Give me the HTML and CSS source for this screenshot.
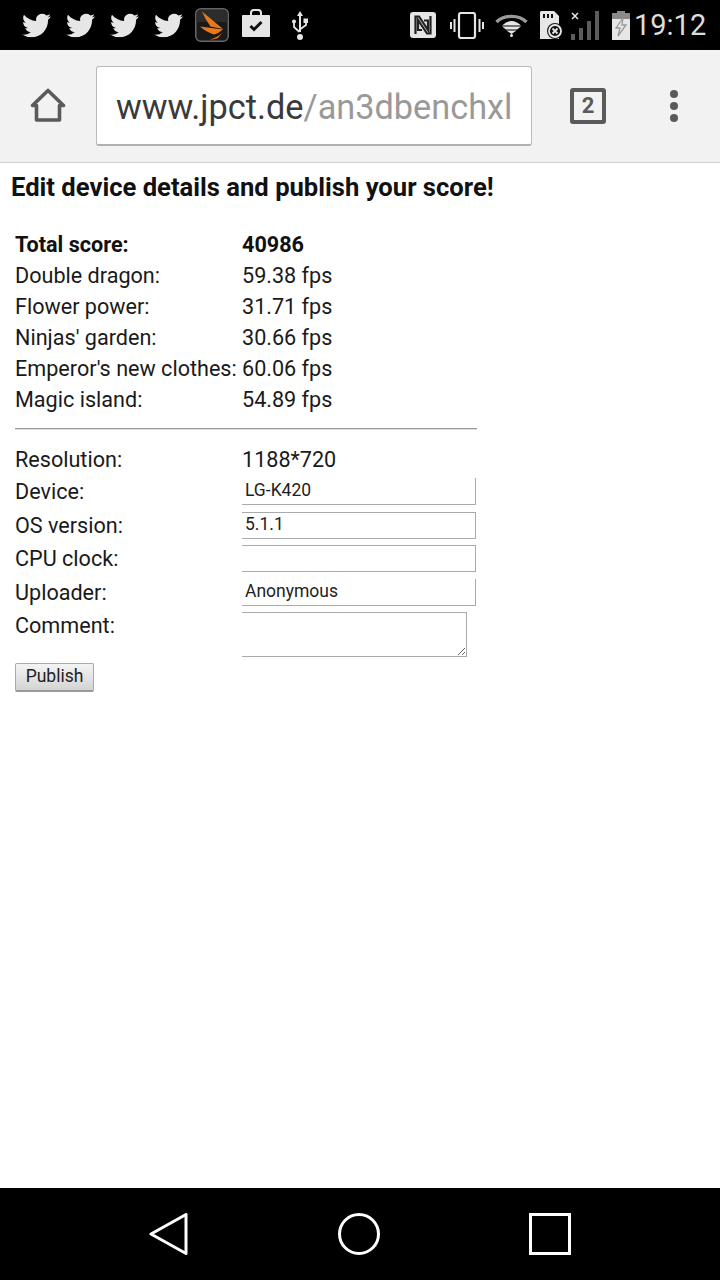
FILE: index.html
```html
<!DOCTYPE html>
<html lang="en">
<head>
    <meta charset="UTF-8">
    <title>Edit device details</title>
    <link rel="stylesheet" href="styles.css">
</head>
<body>
    <div class="status-bar">
        <svg class="bird" viewBox="0 0 24 20"><use href="#twitter"/></svg>
        <svg class="bird" viewBox="0 0 24 20"><use href="#twitter"/></svg>
        <svg class="bird" viewBox="0 0 24 20"><use href="#twitter"/></svg>
        <svg class="bird" viewBox="0 0 24 20"><use href="#twitter"/></svg>
        <svg class="app-icon" viewBox="0 0 34 34">
            <rect x="0.75" y="0.75" width="32.5" height="32.5" rx="5" fill="#1a1a1a" stroke="#666" stroke-width="1.5"/>
            <path d="M1.500 6a4 4 0 0 1 4-4h23a4 4 0 0 1 4 4v8H1.500z" fill="#2c2c2c"/>
            <path d="M7 3.500 L28 21 L15.500 18.500 Q10 11 7 3.500Z" fill="#e8791c"/>
            <path d="M5 18.500 L28 21.500 Q24 25 19 26.500 Q11 24 5 18.500Z" fill="#e8791c"/>
            <path d="M14.500 31.500 Q22 30 27.500 24.500 L23 30 Q19 31.500 14.500 31.500Z" fill="#e8791c"/>
        </svg>
        <svg class="bag" viewBox="0 0 28 28">
            <path d="M9 6V4a3 3 0 0 1 3-3h4a3 3 0 0 1 3 3v2" fill="none" stroke="#e6e6e6" stroke-width="2"/>
            <path d="M1 6h26a1 1 0 0 1 1 1v20a1 1 0 0 1-1 1H1a1 1 0 0 1-1-1V7a1 1 0 0 1 1-1z" fill="#e6e6e6"/>
            <path d="M8.500 17l3.500 3.500 7.500-7.500" fill="none" stroke="#111" stroke-width="3"/>
        </svg>
        <svg class="usb" viewBox="0 0 16 29">
            <path d="M8 0l3 5H9v16H7V5H5z" fill="#e6e6e6"/>
            <path d="M7.500 21 L2 16 V12" fill="none" stroke="#e6e6e6" stroke-width="1.800"/>
            <path d="M8.500 18 L14 14 V11" fill="none" stroke="#e6e6e6" stroke-width="1.800"/>
            <circle cx="2" cy="10.500" r="2" fill="#e6e6e6"/>
            <rect x="11.500" y="7.500" width="4.500" height="4.500" fill="#e6e6e6"/>
            <circle cx="8" cy="26" r="3" fill="#e6e6e6"/>
        </svg>

        <div class="status-right">
            <svg class="nfc" viewBox="0 0 26 26">
                <rect width="26" height="26" rx="3" fill="#e6e6e6"/>
                <path d="M5.500 22V4.500h3.500l9 13.500V8.500h-4" fill="none" stroke="#222" stroke-width="2.200"/>
                <path d="M20.500 4v17.500H17L8 8v10h4" fill="none" stroke="#222" stroke-width="2.200"/>
            </svg>
            <svg class="vibrate" viewBox="0 0 34 27">
                <rect x="9" y="1" width="16" height="25" rx="2" fill="none" stroke="#e6e6e6" stroke-width="2.200"/>
                <path d="M4.500 7v13M1 10v7M29.500 7v13M33 10v7" stroke="#e6e6e6" stroke-width="2"/>
            </svg>
            <svg class="wifi" viewBox="0 0 33 24">
                <path d="M1.500 9 C9 1.500 24 1.500 31.500 9" fill="none" stroke="#9a9a9a" stroke-width="3.200"/>
                <path d="M7 12.500 Q16.500 3.500 26 12.500 L16.500 12.500 L7 12.500Z" fill="#e6e6e6"/>
                <path d="M7 13.500 H26 L22 16.500 H11Z" fill="#e6e6e6"/>
                <path d="M11.500 17.500 H21.500 L16.500 21z" fill="#e6e6e6"/>
                <circle cx="16.500" cy="22.500" r="1.500" fill="#e6e6e6"/>
            </svg>
            <svg class="sd" viewBox="0 0 23 28">
                <path d="M1 0h13l5 5v23H0V1z" fill="#e6e6e6"/>
                <path d="M3 3h2v4H3zM7 3h2v4H7zM11 3h2v4h-2z" fill="#111"/>
                <circle cx="15" cy="20" r="8" fill="#111"/>
                <circle cx="15" cy="20" r="6" fill="none" stroke="#e6e6e6" stroke-width="1.800"/>
                <path d="M12.500 17.500l5 5M17.500 17.500l-5 5" stroke="#e6e6e6" stroke-width="1.800"/>
            </svg>
            <svg class="signal" viewBox="0 0 29 29">
                <path d="M1 2l6 6M7 2L1 8" stroke="#e6e6e6" stroke-width="1.500"/>
                <path d="M0 23h4v6H0zM8 17h4v12H8zM16 10h4v19h-4zM24 0h4v29h-4z" fill="#5c5c5c"/>
            </svg>
            <svg class="battery" viewBox="0 0 18 29">
                <path d="M5 0h8v2h5v27H0V2h5z" fill="#8a8a8a"/>
                <path d="M0 8h18v21H0z" fill="#e6e6e6"/>
                <path d="M11 7L4 17h4l-2 8 8-11h-4z" fill="none" stroke="#999" stroke-width="1.300"/>
            </svg>
            <span class="clock">19:12</span>
        </div>
    </div>

    <div class="toolbar">
        <svg class="home-icon" viewBox="0 0 36 36">
            <path d="M18 2.500 L33.500 17.500 H29.500 V32 H6.500 V17.500 H2.500 Z" fill="none" stroke="#5a5a5a" stroke-width="3.600" stroke-linejoin="round"/>
        </svg>
        <div class="url-box"><div class="url-text"><span class="url-host">www.jpct.de</span><span class="url-path">/an3dbenchxl</span></div></div>
        <div class="tab-count">2</div>
        <div class="menu-dots"><i></i><i></i><i></i></div>
    </div>

    <main class="content">
        <h2>Edit device details and publish your score!</h2>

        <table class="scores">
            <tr class="total"><td class="name">Total score:</td><td>40986</td></tr>
            <tr><td class="name">Double dragon:</td><td>59.38 fps</td></tr>
            <tr><td class="name">Flower power:</td><td>31.71 fps</td></tr>
            <tr><td class="name">Ninjas' garden:</td><td>30.66 fps</td></tr>
            <tr><td class="name">Emperor's new clothes:</td><td>60.06 fps</td></tr>
            <tr><td class="name">Magic island:</td><td>54.89 fps</td></tr>
        </table>

        <hr>

        <table class="details">
            <tr class="res-row"><td class="name">Resolution:</td><td>1188*720</td></tr>
            <tr><td class="name">Device:</td><td><input type="text" class="no-top" value="LG-K420"></td></tr>
            <tr><td class="name">OS version:</td><td><input type="text" value="5.1.1"></td></tr>
            <tr><td class="name">CPU clock:</td><td><input type="text"></td></tr>
            <tr><td class="name">Uploader:</td><td><input type="text" class="no-top" value="Anonymous"></td></tr>
            <tr><td class="name">Comment:</td><td><textarea></textarea></td></tr>
        </table>

        <button class="publish">Publish</button>
    </main>

    <div class="nav-bar">
        <svg class="nav-icon" viewBox="0 0 42 42"><path d="M3 21 L38 1.500 V40.500 Z" fill="none" stroke="#fff" stroke-width="3" stroke-linejoin="round"/></svg>
        <svg class="nav-icon circle" viewBox="0 0 42 42"><circle cx="21" cy="21" r="19.500" fill="none" stroke="#fff" stroke-width="3"/></svg>
        <svg class="nav-icon square" viewBox="0 0 42 42"><rect x="1.500" y="1.500" width="39" height="39" fill="none" stroke="#fff" stroke-width="3"/></svg>
    </div>

    <svg class="defs" width="0" height="0">
        <symbol id="twitter" viewBox="0 0 24 20">
            <path fill="#e6e6e6" d="M23.950 2.570a10 10 0 0 1-2.820.780 4.960 4.960 0 0 0 2.160-2.730c-.95.560-2 .96-3.130 1.190a4.920 4.920 0 0 0-8.380 4.480C7.690 6.100 4.070 4.130 1.640 1.160a4.820 4.820 0 0 0-.67 2.480c0 1.710.87 3.210 2.190 4.090a4.900 4.900 0 0 1-2.230-.61v.06a4.920 4.920 0 0 0 3.950 4.820 5 5 0 0 1-2.210.09 4.940 4.940 0 0 0 4.600 3.420 9.870 9.870 0 0 1-6.100 2.100c-.39 0-.78-.02-1.170-.06a14 14 0 0 0 7.560 2.210c9.050 0 14-7.500 14-13.990 0-.21 0-.42-.02-.63A9.940 9.940 0 0 0 24 2.590z"/>
        </symbol>
    </svg>
</body>
</html>
```

FILE: styles.css
```css
body {
    font-family: Roboto, sans-serif;
    background-color: #fff;
    color: #1a1a1a;
    margin: 0;
    height: 100vh;
    display: flex;
    flex-direction: column;
    overflow: hidden;
}

.defs {
    display: none;
}

/* status bar */
.status-bar {
    height: 50px;
    flex: none;
    background-color: #000;
    display: flex;
    align-items: center;
    padding-left: 22px;
}

.bird {
    width: 29px;
    height: 25px;
    margin-right: 15px;
}

.app-icon {
    width: 34px;
    height: 34px;
    margin-left: -3px;
    margin-right: 13px;
}

.bag {
    width: 28px;
    height: 28px;
    margin-top: -4px;
    margin-right: 22px;
}

.usb {
    width: 16px;
    height: 29px;
}

.status-right {
    margin-left: auto;
    display: flex;
    align-items: center;
    padding-right: 16px;
}

.nfc {
    width: 26px;
    height: 26px;
    margin-right: 14px;
}

.vibrate {
    width: 34px;
    height: 27px;
    margin-right: 11px;
}

.wifi {
    width: 33px;
    height: 24px;
    margin-right: 12px;
}

.sd {
    width: 23px;
    height: 28px;
    margin-right: 8px;
}

.signal {
    width: 29px;
    height: 29px;
    margin-right: 12px;
}

.battery {
    width: 18px;
    height: 29px;
    margin-right: 4px;
}

.clock {
    font-size: 29px;
    color: #ddd;
    width: 70px;
}

/* browser toolbar */
.toolbar {
    height: 113px;
    flex: none;
    box-sizing: border-box;
    background-color: #f2f2f2;
    border-bottom: 1px solid #cfcfcf;
    display: flex;
    align-items: center;
    padding: 0 0 0 30px;
}

.home-icon {
    width: 36px;
    height: 36px;
    margin-right: 30px;
}

.url-box {
    width: 436px;
    height: 80px;
    box-sizing: border-box;
    background-color: #fff;
    border: 1px solid #bbb;
    border-bottom: 2px solid #b0b0b0;
    border-radius: 3px;
    padding: 0 20px 0 19px;
    font-size: 34.3px;
    line-height: 80px;
}

.url-text {
    white-space: nowrap;
    overflow: hidden;
}

.url-host {
    color: #3a3a3a;
}

.url-path {
    color: #999;
}

.tab-count {
    width: 36px;
    height: 36px;
    box-sizing: border-box;
    margin-left: 38px;
    border: 4px solid #5a5a5a;
    border-radius: 3px;
    color: #5a5a5a;
    font-size: 22px;
    font-weight: bold;
    line-height: 28px;
    text-align: center;
}

.menu-dots {
    margin-left: 64px;
    display: flex;
    flex-direction: column;
    gap: 4px;
}

.menu-dots i {
    width: 8px;
    height: 8px;
    border-radius: 50%;
    background-color: #5a5a5a;
}

/* page content */
.content {
    flex: 1;
    padding: 9px 0 0 11px;
}

h2 {
    margin: 0 0 27px;
    font-size: 25.6px;
    line-height: 30px;
    font-weight: bold;
    color: #111;
}

table {
    border-collapse: collapse;
    margin-left: 4px;
    font-size: 21.6px;
}

td {
    padding: 0;
    vertical-align: top;
}

.name {
    width: 227px;
}

.scores td {
    height: 31px;
    line-height: 31px;
}

.total {
    font-weight: bold;
    color: #111;
}

hr {
    width: 462px;
    margin: 13px 0 15px 4px;
    border: none;
    border-top: 1px solid #999;
    border-bottom: 1px solid #ddd;
}

.details td {
    height: 33.5px;
    line-height: 28px;
}

.details .res-row td {
    height: 33px;
    line-height: 30px;
}

input {
    display: block;
    box-sizing: border-box;
    width: 234px;
    height: 27px;
    margin: 0;
    padding: 0 3px 2px;
    font-family: Roboto, sans-serif;
    font-size: 17.5px;
    color: #222;
    border: none;
    border-top: 1px solid #aaa;
    border-right: 1px solid #aaa;
    border-bottom: 1px solid #aaa;
    border-radius: 0;
    outline: none;
}

input.no-top {
    border-top: none;
}

textarea {
    display: block;
    box-sizing: border-box;
    width: 225px;
    height: 45px;
    margin: 0;
    padding: 0;
    border: none;
    border-top: 1px solid #aaa;
    border-right: 1px solid #aaa;
    border-bottom: 1px solid #aaa;
    border-radius: 0;
}

.publish {
    display: block;
    box-sizing: border-box;
    width: 79px;
    height: 29px;
    margin: 6px 0 0 4px;
    padding: 0 0 3px;
    font-family: Roboto, sans-serif;
    font-size: 17.5px;
    color: #222;
    background: linear-gradient(#f4f4f4, #d4d4d4);
    border: 1px solid #aaa;
    border-bottom: 2px solid #999;
    border-radius: 2px;
}

/* android nav bar */
.nav-bar {
    height: 92px;
    flex: none;
    background-color: #000;
    display: flex;
    align-items: center;
    gap: 147px;
    padding-left: 148px;
}

.nav-icon {
    width: 42px;
    height: 42px;
}

.nav-icon.circle {
    margin-left: 1px;
}

.nav-icon.square {
    margin-left: 2px;
}
```
